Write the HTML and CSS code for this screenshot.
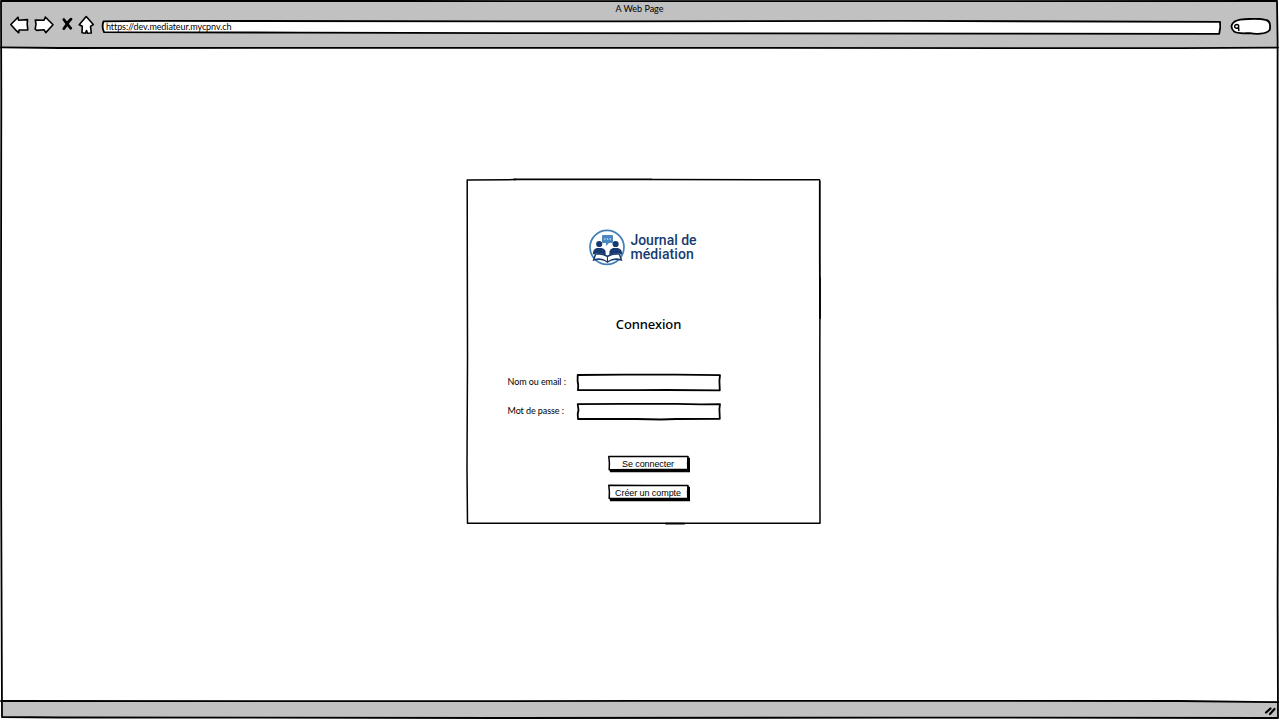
FILE: index.html
```html
<!DOCTYPE html>
<html lang="fr">
<head>
<meta charset="utf-8">
<title>Journal de médiation</title>
<link rel="stylesheet" href="styles.css">
</head>
<body>
<div class="browser">
  <svg class="sketch" viewBox="0 0 1280 721">
    <path d="M1 1 L400 1 L800 1.2 L1277 1 L1277.6 40 L1277.5 300 L1278 450 L1277.6 600 L1278 718 L900 717.6 L500 718 L60 717.5 L2 717 L1.2 500 L1 300 L1.3 100 Z"/>
    <path d="M1 47.4 L60 48 L640 47.8 L1180 48.2 L1278 47.6"/>
    <path d="M1 701 L400 701.2 L640 700.9 L1180 701 L1278 702.2"/>
  </svg>
  <header class="chrome">
    <div class="page-title">A Web Page</div>
    <div class="toolbar">
      <svg class="nav" viewBox="0 0 90 22">
        <path d="M.8 10.5 8 3.2 8.5 6.2 17.5 5.6 17.2 10 17.8 16 9 16 8.8 18.8 5.5 15.8Z"/>
        <path d="M25.3 6 34 6.2 35.3 3 43 10.8 35.8 18.6 34 15.7 26.8 16.4 25.2 15.2 26 10Z"/>
        <path class="cross" d="M53.8 5.5C55 7 58.5 12 60.7 14.2M61 5.2C58 7.5 56 12 53.8 14.6"/>
        <path d="M69.2 10.7 76.2 2.5 83.3 10.5 80.5 12.3 81.3 19 77.5 19.3 76.5 16.5 75.5 19.2 72 18.8 72.3 12.3Z"/>
      </svg>
      <div class="address">
        <svg class="sketch" viewBox="0 0 1120 16" preserveAspectRatio="none">
          <path class="paper" d="M2.5 1.4 L50 .9 L520 1.4 L800 .9 L1119 1.9 L1119.3 7 L1118.2 13.8 L900 13.6 L420 13.2 L200 12.6 L3 12.2 Q.5 7 2.5 1.4Z"/>
        </svg>
        <span class="url">https://dev.mediateur.mycpnv.ch</span>
      </div>
      <svg class="search" viewBox="0 0 42 18">
        <path class="paper" d="M10 1.6C20 .6 32 .7 36 2 41 3.2 40.5 8 39.7 12 36 16.5 25 16.3 20 15.2 13 15.2 7 16 4 13.4-.5 9 1 3.5 10 1.6Z"/>
        <path d="M7 6.5C3.5 6.5 4 11 7.5 10.2 9.5 9 9 6.5 7 6.5M8.6 9.5 8.8 12.5" stroke-width="1.5"/>
      </svg>
    </div>
  </header>
  <main class="content">
    <section class="card">
      <svg class="sketch" viewBox="0 0 355 347">
        <path d="M1.5 1.9 L50 1.6 M185 1.6 L353.5 1.7 M354 100 L353.8 180 L354 345.3 L240 345.2 L1.5 345.2 L1 290 L1.5 180 L1.3 80 L1.2 2" stroke-width="1.5"/>
        <path d="M48 1.3 L185 1.3 M353.8 3 L353.8 75 L354 140"/>
        <path d="M200 345.7 L218 345.7"/>
      </svg>
      <div class="brand">
        <svg class="emblem" viewBox="0 0 38 38">
          <circle cx="19" cy="19.3" r="17" fill="none" stroke="#4380b8" stroke-width="1.7"/>
          <path d="M15 7h9q1 0 1 1v6q0 1-1 1h-3l-3 3v-3h-3q-1 0-1-1V8q0-1 1-1Z" fill="#4b88c2"/>
          <path d="M16.2 11h1.3m1.4 0h1.3m1.4 0h1.3" stroke="#fff" stroke-width="1.2" stroke-linecap="butt"/>
          <g fill="#173b70">
            <circle cx="11.2" cy="16" r="3.1"/><circle cx="27.6" cy="16" r="3.1"/>
            <path d="M5 26.5V24Q6 20.5 9 20H13.5Q17 20.5 17.6 23.5V27Q12 24 5 26.5ZM21.4 27V23.5Q22 20.5 25 20H29.5Q33 20.5 34 24V26.5Q27 24 21.4 27Z"/>
            <path d="M4.5 33 7 25.5Q14 24 19.4 27.5 25 24 32 25.5L34.5 33Q25 30 19.5 35 14 30 4.5 33Z"/>
          </g>
          <path d="M6.8 30.7 8.2 26.8Q14 26 18.9 29V33Q14 29 6.8 30.7ZM20 33V29Q25 26 30.8 26.8L32.3 30.7Q25 29 20 33Z" fill="#fff"/>
        </svg>
        <div class="wordmark"><span class="w1">Journal de</span><span class="w2">médiation</span></div>
      </div>
      <h1 class="heading">Connexion</h1>
      <form class="form">
        <div class="row">
          <label class="l1">Nom ou email :</label>
          <div class="field"><svg class="sketch" viewBox="0 0 146 19"><path d="M1.7 2 L48 1.7 L100 1.6 L144 2.2 L143.4 8 L143.8 17.3 L90 17 L60 17.2 L2 17.2 L2.2 12 L1.6 8Z"/></svg></div>
        </div>
        <div class="row">
          <label class="l2">Mot de passe :</label>
          <div class="field"><svg class="sketch" viewBox="0 0 146 19"><path d="M1.7 2.2 L48 1.9 L100 1.8 L125 2.3 L144 2.2 L143.4 7 L143.8 16.8 L100 17 L85 17.5 L60 17 L2 17 L1.7 12 L2.5 8Z"/></svg></div>
        </div>
      </form>
      <div class="actions">
        <div class="button"><svg class="sketch" viewBox="0 0 84 18"><path class="shade" d="M80.5 2 83 3 83 17.3 3 17.3 2.7 14.5 80.5 14.5Z"/><path d="M1.8 1.4 L40 1.6 L81 1.4 L80.6 8 L80.8 14.6 L40 14.5 L2.2 14.8 L2.4 8Z" stroke-width="1.5"/></svg><span class="b1">Se connecter</span></div>
        <div class="button"><svg class="sketch" viewBox="0 0 84 18"><path class="shade" d="M80.5 2 83 3 83 17.3 3 17.3 2.7 14.5 80.5 14.5Z"/><path d="M1.8 1.2 L40 1.6 L81 1.4 L80.6 8 L80.8 14.6 L40 14.5 L2.2 14.6 L2.4 8Z" stroke-width="1.5"/></svg><span class="b2">Créer un compte</span></div>
      </div>
    </section>
  </main>
  <footer class="status">
    <svg class="grip" viewBox="0 0 14 12"><path d="M2 8.5 6.5 4.5M6 10 10.5 5"/></svg>
  </footer>
</div>
</body>
</html>
```
FILE: styles.css
```css
* { box-sizing: border-box; }
body { margin: 0; background: #fff; font-family: Lato, sans-serif; color: #000; font-size: 9px; }
svg { display: block; fill: none; stroke: #000; stroke-width: 1.8; stroke-linejoin: round; stroke-linecap: round; }
.browser { position: relative; width: 1280px; height: 721px; display: flex; flex-direction: column; overflow: hidden; padding: 0 2px 3px 1px; }
.sketch { position: absolute; inset: 0; width: 100%; height: 100%; pointer-events: none; }
.chrome { height: 48px; background: #c1c1c1; }
.page-title { height: 18px; line-height: 18px; text-align: center; }
.toolbar { display: flex; align-items: flex-start; padding: 1px 5px 0 9px; }
.nav { width: 90px; height: 22px; margin: -5px 1px 0 0; flex: none; }
.nav path { fill: #fff; stroke-width: 1.6; }
.nav .cross { stroke-width: 2.8; fill: none; }
.address { position: relative; width: 1120px; flex: none; height: 16px; display: flex; align-items: flex-start; margin: 1px 9px 0 0; padding-left: 5px; }
.paper { fill: #fff; }
.url { position: relative; line-height: 13px; white-space: nowrap; letter-spacing: -0.09px; }
.search { width: 42px; height: 18px; margin-top: -1px; flex: none; }
.content { flex: 1; display: flex; justify-content: center; padding: 130px 0 0 7px; }
.card { position: relative; width: 355px; height: 347px; display: flex; flex-direction: column; align-items: center; padding: 50px 0 0 12px; }
.brand { display: flex; align-items: center; gap: 4px; height: 38px; margin-right: 13px; }
.emblem { width: 38px; height: 38px; stroke: none; }
.wordmark { display: flex; flex-direction: column; color: #173b70; font: 500 14px/14px Roboto, sans-serif; white-space: nowrap; }
.w2 { letter-spacing: 0.1px; }
.heading { margin: 48px 1px 0 0; font: 500 13px/20px "Noto Sans", sans-serif; letter-spacing: -0.1px; }
.form { display: flex; flex-direction: column; gap: 10px; margin: 39px 0 0 30px; width: 214px; align-self: flex-start; }
.row { display: flex; justify-content: space-between; align-items: flex-start; }
.row label { line-height: 17px; white-space: nowrap; letter-spacing: -0.08px; }
.field { position: relative; width: 146px; height: 19px; }
.actions { display: flex; flex-direction: column; gap: 11px; margin-top: 34px; }
.button { position: relative; width: 84px; height: 18px; padding-right: 2px; line-height: 18px; text-align: center; white-space: nowrap; font-family: "Liberation Sans", Arial, sans-serif; letter-spacing: -0.08px; }
.button span { position: relative; }
.shade { fill: #000; stroke: none; }
.status { height: 17px; background: #c1c1c1; display: flex; justify-content: flex-end; align-items: center; }
.grip { width: 14px; height: 12px; stroke-width: 2.2; }
```
